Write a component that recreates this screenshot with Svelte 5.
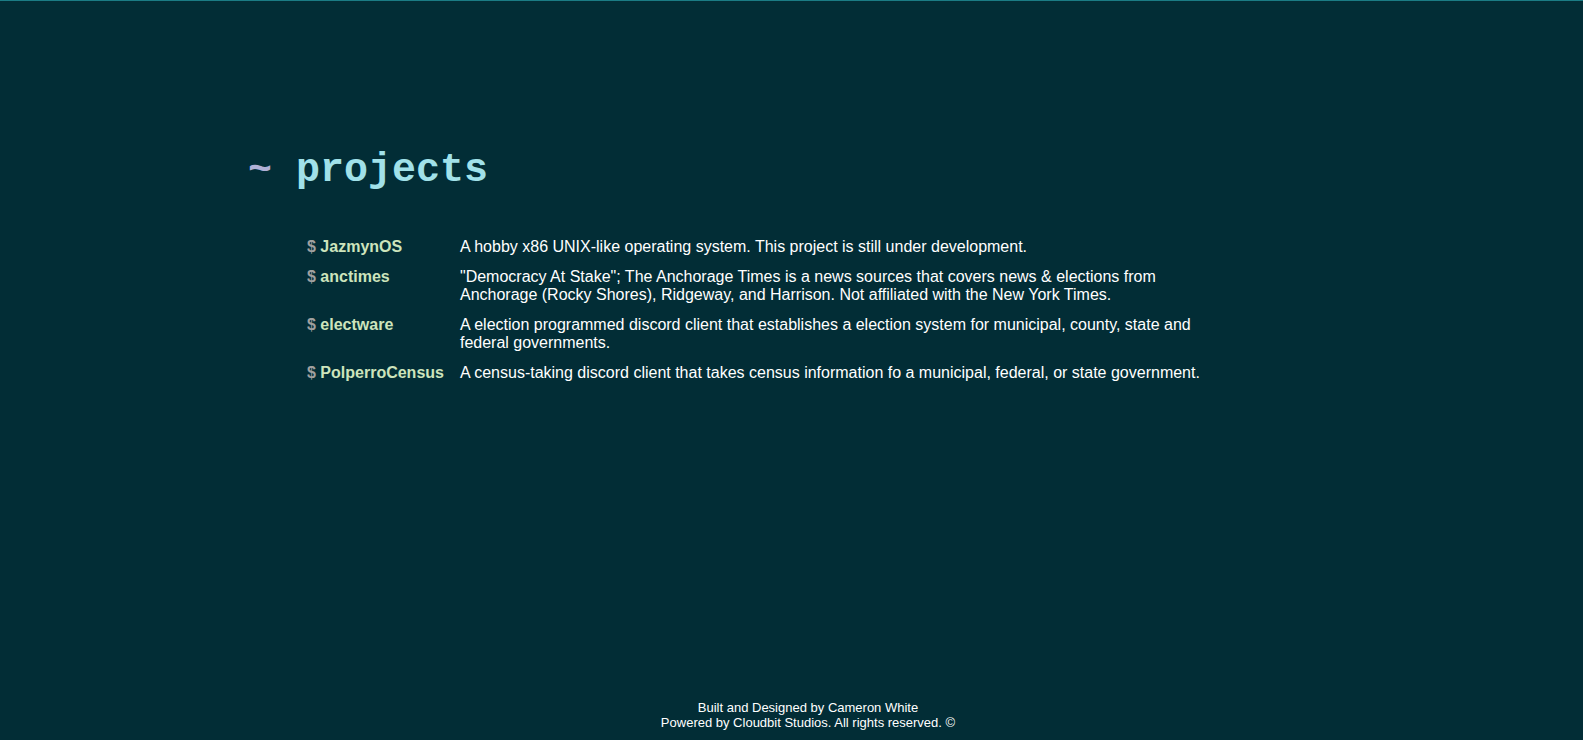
<script>
  const projects = [
    { name: 'JazmynOS', text: 'A hobby x86 UNIX-like operating system. This project is still under development.' },
    { name: 'anctimes', text: '"Democracy At Stake"; The Anchorage Times is a news sources that covers news & elections from Anchorage (Rocky Shores), Ridgeway, and Harrison. Not affiliated with the New York Times.' },
    { name: 'electware', text: 'A election programmed discord client that establishes a election system for municipal, county, state and federal governments.' },
    { name: 'PolperroCensus', text: 'A census-taking discord client that takes census information fo a municipal, federal, or state government.' }
  ];
</script>

<div class="page">
  <main>
    <h1><span class="tilde">~</span> projects</h1>
    <table>
      <tbody>
        {#each projects as project}
          <tr>
            <th scope="row"><span class="prompt">$</span> <a href="#{project.name}">{project.name}</a></th>
            <td>{project.text}</td>
          </tr>
        {/each}
      </tbody>
    </table>
  </main>
  <footer>
    <p>Built and Designed by Cameron White</p>
    <p>Powered by Cloudbit Studios. All rights reserved. ©</p>
  </footer>
</div>

<style>
  :global(body) {
    margin: 0;
    background: #022d36;
  }
  .page {
    box-sizing: border-box;
    min-height: 100vh;
    display: flex;
    flex-direction: column;
    border-top: 1px solid #1b7c85;
    color: #fff;
    font: 16px/18px "Liberation Sans", Arial, sans-serif;
  }
  main {
    flex: 1;
    width: 61%;
    margin: 0 0 0 248px;
    padding-top: 147px;
  }
  h1 {
    margin: 0;
    font: bold 40px/46px "Courier New", "Liberation Mono", monospace;
    color: #a1e1e9;
  }
  .tilde {
    color: #b0b1d6;
  }
  table {
    margin: 32px 0 0 51px;
    border-spacing: 8px 12px;
    border-collapse: separate;
  }
  th, td {
    padding: 0;
    text-align: left;
    vertical-align: top;
  }
  th {
    padding-right: 8px;
    white-space: nowrap;
  }
  .prompt {
    color: #a0a0a0;
  }
  a {
    color: #cde4bc;
    text-decoration: none;
  }
  footer {
    margin-left: 33px;
    padding-bottom: 10px;
    text-align: center;
    font-size: 13px;
    line-height: 15px;
  }
  footer p {
    margin: 0;
  }
</style>
